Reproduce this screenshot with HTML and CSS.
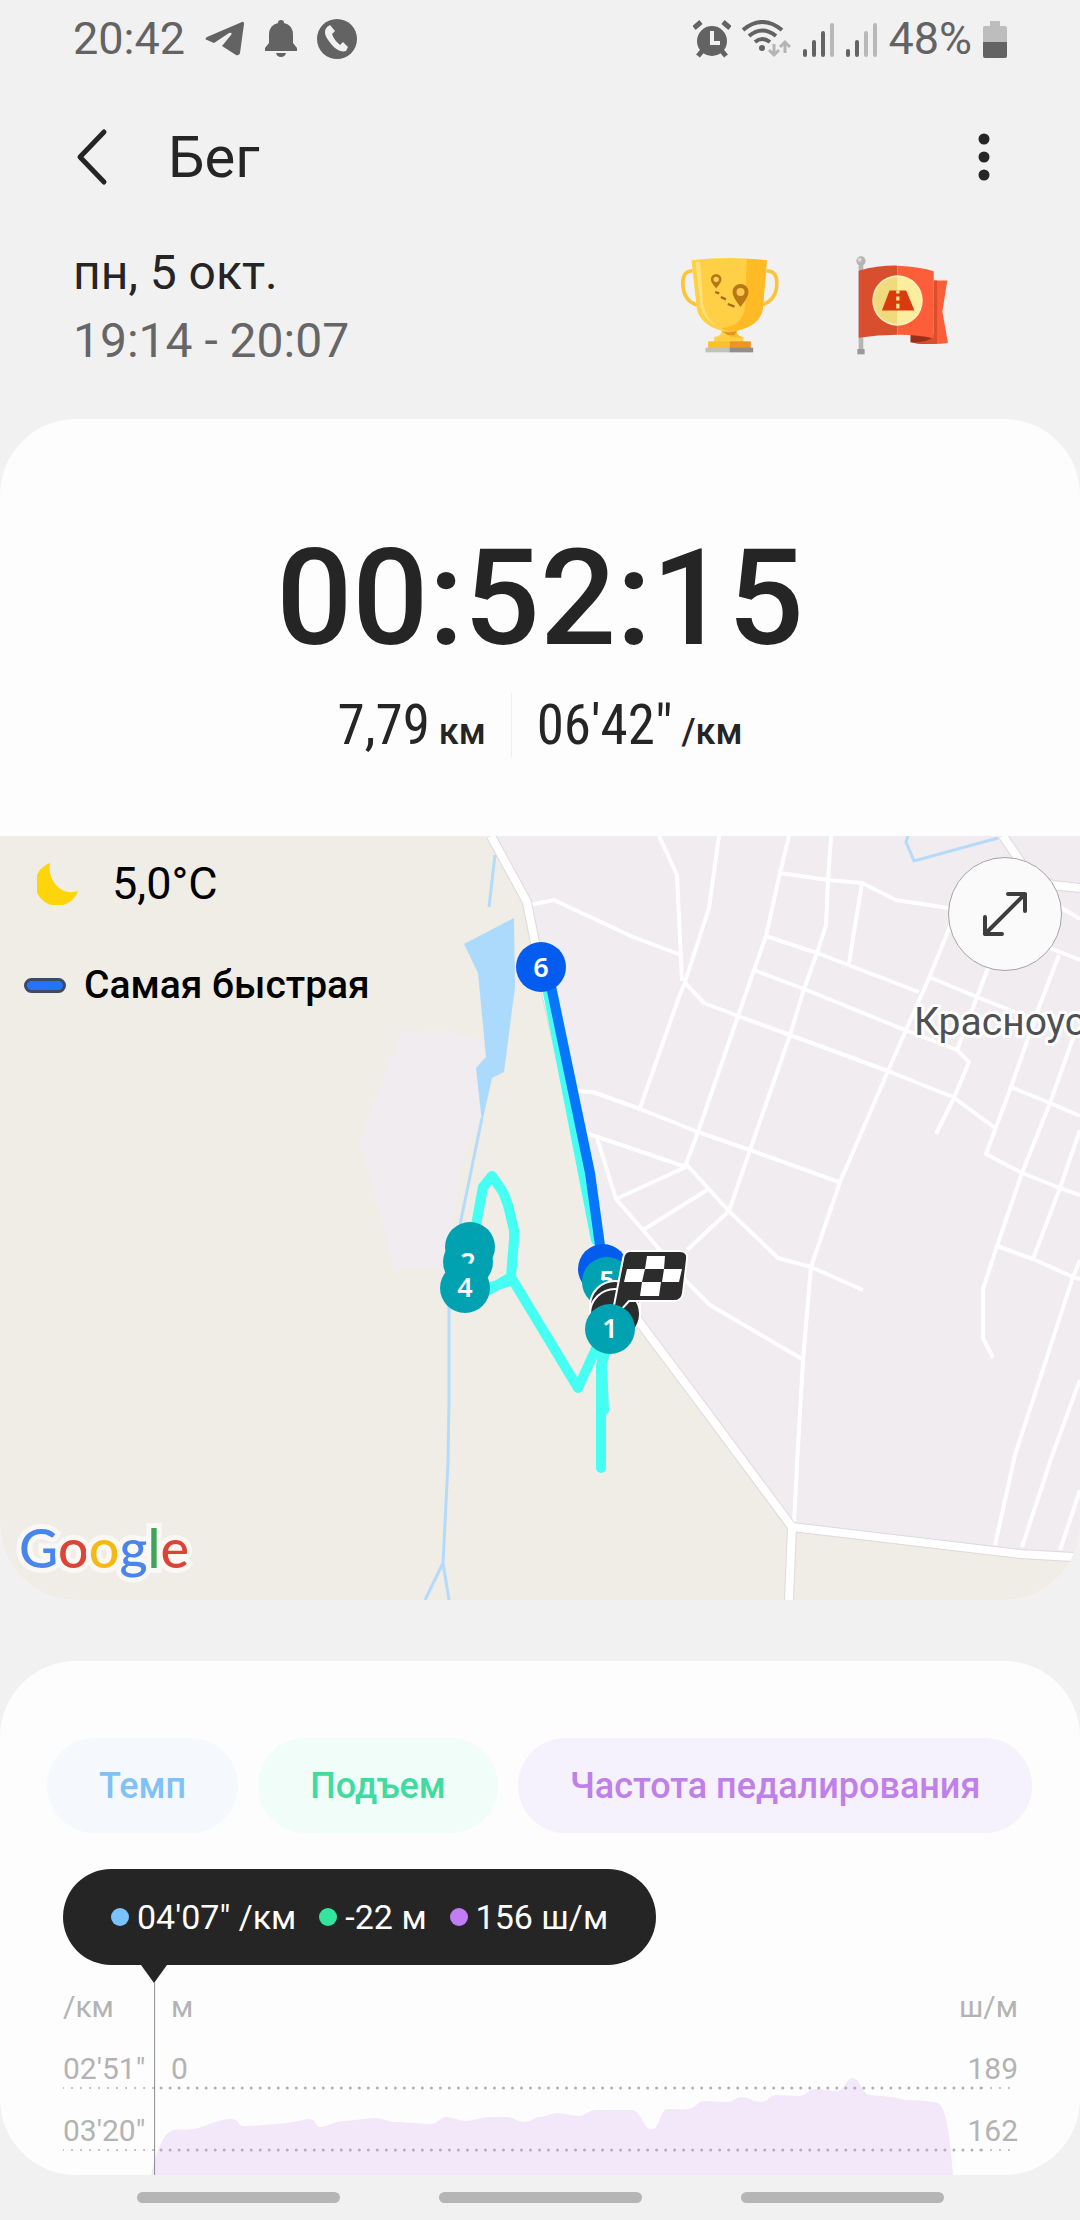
FILE: index.html
```
<!DOCTYPE html>
<html lang="ru">
<head>
    <meta charset="UTF-8">
    <meta name="viewport" content="width=device-width, initial-scale=1.0">
    <title>Бег</title>
    <link rel="stylesheet" href="styles.css">
</head>
<body>

<div class="app">

    <!-- Status bar -->
    <div class="status-bar">
        <div class="status-left">
            <span>20:42</span>
            <svg width="40" height="36" viewBox="0 0 40 36"><path fill="#636363" d="M37 1 2 16q-3 2 0 3l7 3 15-10q4-1 2 2l-9 11 14 9q3 1 4-2l4-29q0-3-2-2z"/></svg>
            <svg width="32" height="38" viewBox="0 0 32 38"><path fill="#636363" d="M16 0a3 3 0 0 1 3 3q9 2 9 12v8l4 5v3H0v-3l4-5v-8Q4 5 13 3a3 3 0 0 1 3-3zM11 33h10q-1 4-5 4t-5-4z"/></svg>
            <svg width="40" height="40" viewBox="0 0 40 40"><circle cx="20" cy="20" r="20" fill="#636363"/><path fill="#f1f1f1" d="m10 8 3-2 5 6-3 3q2 6 8 11l3-3 5 5-2 4q-7 2-14-6T8 14q0-4 2-6z"/></svg>
        </div>
        <div class="status-right">
            <svg width="38" height="38" viewBox="0 0 38 38"><g stroke="#636363" stroke-width="5" fill="none"><path d="m1 8 7-6M37 8l-7-6M5 36l5-6M33 36l-5-6"/></g><circle cx="19" cy="21" r="15" fill="#636363"/><path d="M19 11v12h8" stroke="#f1f1f1" stroke-width="4" fill="none"/></svg>
            <svg width="49" height="38" viewBox="0 0 49 38"><g fill="none" stroke="#636363" stroke-width="4"><path d="M1 10q19-16 39 0M7 16q13-11 27 0M13 22q7-6 15 0"/></g><circle cx="20" cy="28" r="3" fill="#636363"/><path d="M32 24v11m-5-5 5 5 5-5M43 33V22m-5 5 5-5 5 5" fill="none" stroke="#b4b4b4" stroke-width="3"/></svg>
            <svg width="32" height="36" viewBox="0 0 32 36"><g stroke-width="4" stroke-linecap="round" stroke="#636363"><path d="M3 30v4M12 21v13M21 12v22"/><path d="M30 4v30" stroke="#b8b8b8"/></g></svg>
            <svg width="32" height="36" viewBox="0 0 32 36"><g stroke-width="4" stroke-linecap="round" stroke="#636363"><path d="M3 30v4M12 21v13"/><path d="M21 12v22M30 4v30" stroke="#b8b8b8"/></g></svg>
            <span>48%</span>
            <svg width="24" height="37" viewBox="0 0 24 37"><path fill="#bdbdbd" d="M7 0h10v5h5q2 0 2 2v15H0V7q0-2 2-2h5z"/><path fill="#636363" d="M0 21h24v14q0 2-2 2H2q-2 0-2-2z"/></svg>
        </div>
    </div>

    <!-- Header -->
    <header class="header">
        <button class="icon-button" type="button" aria-label="Назад">
            <svg width="34" height="58" viewBox="0 0 34 58"><path d="M30 4 6 29l24 25" fill="none" stroke="#252525" stroke-width="5" stroke-linecap="round" stroke-linejoin="round"/></svg>
        </button>
        <h1>Бег</h1>
        <button class="icon-button menu-button" type="button" aria-label="Меню">
            <svg width="12" height="50" viewBox="0 0 12 50"><g fill="#252525"><circle cx="6" cy="7" r="5.5"/><circle cx="6" cy="25" r="5.5"/><circle cx="6" cy="43" r="5.5"/></g></svg>
        </button>
    </header>

    <section class="summary">
        <div>
            <div class="date">пн, 5 окт.</div>
            <div class="period">19:14 - 20:07</div>
        </div>
        <div class="awards">
            <svg width="99" height="96" viewBox="58 50 296 288">
                <path d="M96 92q-30-2-30 36 0 52 42 66M316 92q32-2 32 36 0 52-46 66" fill="none" stroke="#fdc43a" stroke-width="11"/>
                <path fill="#ffd046" d="M92 60q112-14 226 0l-12 145q-8 50-78 66-4 14 20 20v14H160v-14q26-6 22-20-64-18-74-66z"/>
                <path fill="#ffba25" d="M258 56q30 0 60 4l-12 145q-8 50-78 66-4 14 20 20h-40v-18q-20-2-26-9 66-8 70-64z"/>
                <path fill="#ffe07a" d="M104 64h14l9 128q8 44 44 66-44-20-52-60z"/>
                <path fill="#df9620" d="M182 272q28 8 46-1l-8 14h-18z"/>
                <path fill="#fbc02d" d="M142 303h64v20h-64z"/><path fill="#ec9622" d="M206 303h64v20h-64z"/>
                <path fill="#bfc3be" d="M134 322h72v14h-72z"/><path fill="#8c8f8b" d="M206 322h71v14h-71z"/>
                <path fill="#b87915" d="M166 101a16 16 0 0 1 16 16q0 10-16 27-16-17-16-27a16 16 0 0 1 16-16zM239 131a24 24 0 0 1 24 24q0 15-24 45-24-30-24-45a24 24 0 0 1 24-24z"/>
                <circle cx="166" cy="117" r="8" fill="#fdd05a"/><circle cx="239" cy="155" r="12" fill="#fdc64e"/>
                <path d="m163 155 12 4M180 170l15 7M201 191l20 8" stroke="#a66a1c" stroke-width="7"/>
            </svg>
            <svg width="93" height="99" viewBox="586 46 280 298">
                <path fill="#b5b5b5" d="M594 70h14v260h-14z"/><path fill="#999" d="M590 326h22v16h-22z"/><circle cx="601" cy="61" r="14" fill="#b4b4b4"/><circle cx="597" cy="57" r="6" fill="#dcdcdc"/>
                <path fill="#9c2f1a" d="M750 282h75v26q-40 6-75-2z"/>
                <path fill="#fb5e38" d="M820 120h41l-15 93 17 95q-20 3-43 3z"/>
                <path fill="#d94e2c" d="M820 120h10v190q-40 2-72-3 44-2 62-18z"/>
                <path fill="#d94e2c" d="M594 90q60-16 117-15v208q-60 0-117 9z"/>
                <path fill="#fb5e38" d="M711 75q70 3 109 17v202q-50-12-109-11z"/>
                <circle cx="711" cy="180" r="76" fill="#fff0bd"/><path fill="#f1da7d" d="M711 109a71 71 0 0 0 0 142z"/><path fill="#fcee9f" d="M711 109a71 71 0 0 1 0 142z"/>
                <path fill="#d93a0e" d="M687 150h50l25 60h-98z"/><path fill="#fae58f" d="M707 150h10v9h-10zM707 168h10v12h-10zM707 190h10v14h-10z"/>
            </svg>
        </div>
    </section>

    <!-- Workout result and map -->
    <main>
        <section class="card result">
            <div class="timer">00:52:15</div>
            <div class="stats">
                <div class="stat"><span class="value">7,79</span> км</div>
                <div class="stat"><span class="value">06'42"</span> /км</div>
            </div>

            <div class="map">
                <svg class="map-canvas" viewBox="0 836 1080 764" preserveAspectRatio="xMidYMid slice">
                    <rect y="836" width="1080" height="764" fill="#efede5"/>
                    <path fill="#f0ecef" d="M491 836 527 902 535 943 602 1258 640 1323 792 1527 1020 1554 1080 1558V836zM401 1032 441 1030 482 1040 486 1057 476 1069 482 1118 461 1163 450 1267 395 1270 382 1223 367 1170 358 1143z"/>
                    <path fill="#acdafd" d="M464 944 514 918 515 987 504 1072 492 1078 482 1123 476 1068 486 1057 478 973z"/>
                    <g class="streams">
                        <path d="M495 855 489 907M482 1118 461 1220 449 1307 449 1400 448 1463 443 1563 425 1600M443 1563 449 1600M908 836 906 842 914 861 998 838"/>
                    </g>
                    <g class="streets">
                        <path d="M659 836 677 875 682 981M719 836 709 908 685 982 679 997 640 1108M685 983 704 1003 738 1016 790 1035 888 1071 953 1097 995 1128"/>
                        <path d="M789 836 780 873 766 936 754 970 738 1016 698 1132 686 1164 729 1211 778 1258 811 1267 863 1290"/>
                        <path d="M831 836 828 880 826 925 817 953 804 989 790 1035 750 1150 729 1211 687 1250"/>
                        <path d="M780 873 828 880 862 883 896 900 948 908M862 883 849 963M766 936 817 953 919 992"/>
                        <path d="M754 970 804 989 905 1030 957 1050 969 1062 953 1100 936 1134"/>
                        <path d="M956 912 929 978 888 1071 840 1182 811 1267 803 1360 798 1447 794 1522"/>
                        <path d="M929 977 977 997 1015 1012M988 968 977 997 957 1050M1050 948 1080 960M1060 907 1080 919"/>
                        <path d="M1059 955 1039 1007 1011 1087 986 1154 1022 1173 1060 1188 1080 1195M1011 1087 1050 1103 1080 1116"/>
                        <path d="M1076 1030 1050 1103 1022 1173 997 1246 983 1289 983 1338 993 1358M997 1246 1033 1259 1073 1277 1080 1279M1080 1130 1060 1188 1033 1259"/>
                        <path d="M1080 1260 1073 1277 1047 1357 1015 1455 995 1545M1080 1380 1053 1453 1022 1547M1080 1490 1060 1550"/>
                        <path d="M530 905 554 900 633 937 681 955M572 1091 593 1092 640 1109 698 1132 750 1150 839 1182M586 1133 686 1167 616 1199M597 1138 616 1199 643 1230 687 1282 710 1305 802 1359M643 1230 707 1190"/>
                    </g>
                    <g class="road-edge"><path d="M491 836 527 902 535 943 570 1100 602 1258 640 1323 700 1403 792 1527 1020 1554 1073 1557M792 1527 789 1600M1003 836 1030 876 1053 885 1080 888"/></g>
                    <g class="road"><path d="M491 836 527 902 535 943 570 1100 602 1258 640 1323 700 1403 792 1527 1020 1554 1073 1557M792 1527 789 1600M1003 836 1030 876 1053 885 1080 888"/></g>

                    <text class="town" x="914" y="1035">Красноус</text>

                    <!-- Track -->
                    <g class="track">
                        <path d="M543 967 596 1240M476 1225 483 1187 492 1176 503 1192 508 1205 514 1230 514 1240 511 1277 578 1388 600 1340M511 1277 470 1301M511 1281 470 1293M602 1340V1364L604 1410M606 1350 601 1366V1468"/>
                    </g>
                    <path class="track-fast" d="M547 967 590 1173 602 1260"/>

                    <!-- Kilometre markers -->
                    <g class="marker">
                        <circle class="fast" cx="541" cy="967" r="25"/><text x="541" y="977">6</text>
                        <circle cx="470" cy="1247" r="25"/><text x="472" y="1257">3</text>
                        <circle cx="468" cy="1262" r="25"/><text x="468" y="1272">2</text>
                        <circle cx="465" cy="1288" r="25"/><text x="465" y="1297">4</text>
                        <circle class="fast" cx="603" cy="1269" r="25"/>
                        <circle cx="607" cy="1282" r="25"/><text x="607" y="1290">5</text>
                    </g>
                    <g fill="#2c2c2c" stroke="#fff" stroke-width="2">
                        <circle cx="615" cy="1306" r="25"/><circle cx="615" cy="1314" r="25"/>
                        <path d="M630 1251h50q8 0 7 8l-4 34q-1 8-9 8h-45l-18 20 12-62q1-8 7-8z"/>
                    </g>
                    <path fill="#fff" d="M647 1256h18l-1 13h-19zM627 1269h18l-3 13h-18zM664 1269h18l-3 13h-17zM642 1282h19l-2 14h-19z"/>
                    <g class="marker"><circle cx="610" cy="1329" r="25"/><text x="610" y="1338">1</text></g>
                </svg>

                <div class="map-info">
                    <div class="weather">
                        <svg width="42" height="42" viewBox="0 0 42 42"><path fill="#fdd50a" d="M13 0A22 22 0 1 0 41 28Q28 32 19 22 11 13 13 0z"/></svg>
                        <span>5,0°C</span>
                    </div>
                    <div class="legend"><i></i><span>Самая быстрая</span></div>
                </div>

                <button class="expand" type="button" aria-label="Развернуть карту">
                    <svg width="46" height="46" viewBox="0 0 46 46"><path d="M3 43 43 3M26 3h17v17M3 26v17h17" fill="none" stroke="#3d3d3d" stroke-width="4" stroke-linecap="round" stroke-linejoin="round"/></svg>
                </button>

                <div class="google"><span class="b">G</span><span class="r">o</span><span class="y">o</span><span class="b">g</span><span class="g">l</span><span class="r">e</span></div>
            </div>
        </section>

        <!-- Charts -->
        <section class="card charts">
            <div class="chips">
                <button class="chip pace" type="button">Темп</button>
                <button class="chip climb" type="button">Подъем</button>
                <button class="chip cadence" type="button">Частота педалирования</button>
            </div>

            <div class="tooltip">
                <span class="point pace">04'07" /км</span>
                <span class="point climb">-22 м</span>
                <span class="point cadence">156 ш/м</span>
            </div>

            <div class="chart">
                <svg class="plot" viewBox="0 0 954 210" preserveAspectRatio="none">
                    <path fill="#f3e8fa" d="M88 210Q96 172 108 166C112 164 120 165 130 164S154 154 166 154 174 161 181 161 225 159 240 155 250 162 257 162 270 156 280 156 303 153 311 153 325 157 333 157 359 159 367 159 376 152 383 152 395 156 402 156 418 152 426 152 436 152 443 152 453 157 460 157 472 152 477 152 487 148 494 148 508 151 515 151 525 145 532 145 558 145 568 145 579 164 588 164 596 144 604 144 617 145 625 144 633 136 641 136 655 137 663 137 671 132 678 132 689 137 697 137 705 130 713 130 727 131 735 131 744 124 752 124 765 126 773 126 782 113 789 113 798 129 806 130 820 131 828 132 837 135 845 135 863 136 870 137 878 141 882 153Q886 170 889 210z"/>
                    <g class="grid-line"><path d="M98 123H918M98 185H918"/><path class="thin" d="M0 123H98M918 123H954M0 185H98M918 185H954"/></g>
                    <path d="M91.5 17V210" stroke="#8c8c8c"/>
                </svg>
                <div class="axis"><span>/км</span><span>м</span><span>ш/м</span></div>
                <div class="axis"><span>02'51"</span><span>0</span><span>189</span></div>
                <div class="axis"><span>03'20"</span><span></span><span>162</span></div>
            </div>
        </section>
    </main>

    <nav class="nav-bar"><i></i><i></i><i></i></nav>

</div>

</body>
</html>
```
FILE: styles.css
```
* {
    box-sizing: border-box;
}
body {
    margin: 0;
    font-family: Roboto, "Liberation Sans", sans-serif;
    background-color: #f1f1f1;
    color: #252525;
}
svg {
    display: block;
    flex-shrink: 0;
}
button {
    border: none;
    padding: 0;
    font-family: inherit;
    cursor: pointer;
}
.app {
    display: flex;
    flex-direction: column;
    min-height: 100vh;
}

/* Status bar */
.status-bar {
    display: flex;
    justify-content: space-between;
    padding: 12px 73px 0;
    font-size: 45px;
    line-height: 54px;
    color: #636363;
}
.status-left, .status-right {
    display: flex;
    align-items: center;
}
.status-left {
    gap: 20px;
}
.status-right {
    gap: 11px;
}

/* Header */
.header {
    display: flex;
    align-items: center;
    height: 68px;
    margin-top: 57px;
    padding: 0 90px 0 74px;
}
.icon-button {
    background: none;
}
h1 {
    margin: 0 0 0 60px;
    font-size: 58px;
    line-height: 68px;
    font-weight: 400;
}
.menu-button {
    margin-left: auto;
}
.summary {
    display: flex;
    justify-content: space-between;
    align-items: center;
    margin-top: 48px;
    padding: 0 131px 0 73px;
    font-size: 48px;
    line-height: 68px;
}
.period {
    color: #666;
}
.awards {
    display: flex;
    align-items: center;
    gap: 77px;
    margin-bottom: 4px;
}

/* Cards */
.card {
    background-color: #fdfdfd;
    border-radius: 76px;
    overflow: hidden;
}
.result {
    margin-top: 44px;
    padding-top: 100px;
}
.timer {
    font-size: 134px;
    line-height: 160px;
    font-weight: 500;
    text-align: center;
}
.stats {
    display: flex;
    justify-content: center;
    height: 64px;
    margin: 14px 0 79px;
    line-height: 64px;
}
.stat {
    padding: 0 25px;
    font-size: 36px;
    font-weight: 500;
}
.stat + .stat {
    border-left: 1px solid #f0f0f0;
}
.value {
    font-family: "Roboto Condensed", Roboto, sans-serif;
    font-size: 55px;
    font-weight: 400;
}

/* Map */
.map {
    position: relative;
    height: 764px;
    overflow: hidden;
}
.map-canvas {
    width: 100%;
    height: 100%;
}
.streams {
    fill: none;
    stroke: #b4dcfa;
    stroke-width: 3;
}
.streets {
    fill: none;
    stroke: #fff;
    stroke-width: 4;
    stroke-linejoin: round;
}
.road-edge {
    fill: none;
    stroke: #dcdadc;
    stroke-width: 10;
}
.road {
    fill: none;
    stroke: #fff;
    stroke-width: 8;
}
.town {
    font-size: 39px;
    fill: #4f5052;
    stroke: #fff;
    stroke-width: 6;
    stroke-linejoin: round;
    paint-order: stroke;
}
.track, .track-fast {
    fill: none;
    stroke: #45fff3;
    stroke-width: 10;
    stroke-linecap: round;
    stroke-linejoin: round;
}
.track-fast {
    stroke: #0677fb;
}
.marker circle {
    fill: #00a2b1;
}
.marker .fast {
    fill: #045cee;
}
.marker text {
    font-family: "Noto Sans", sans-serif;
    font-size: 27px;
    font-weight: 600;
    text-anchor: middle;
    fill: #fff;
}
.map-info {
    position: absolute;
    top: 21px;
    left: 24px;
    color: #000;
}
.weather {
    display: flex;
    align-items: center;
    gap: 33px;
    padding-left: 13px;
    font-size: 45px;
    line-height: 54px;
}
.legend {
    display: flex;
    align-items: center;
    gap: 18px;
    margin-top: 51px;
    font-size: 39px;
    line-height: 46px;
    font-weight: 500;
}
.legend i {
    width: 42px;
    height: 15px;
    border: 3px solid #3c4a63;
    border-radius: 8px;
    background-color: #2473fb;
}
.expand {
    position: absolute;
    top: 21px;
    right: 18px;
    display: flex;
    align-items: center;
    justify-content: center;
    width: 114px;
    height: 114px;
    border: 1px solid #a5a5a5;
    border-radius: 50%;
    background-color: #fafafa;
}
.google {
    position: absolute;
    left: 19px;
    bottom: 20px;
    font-family: Lato, sans-serif;
    font-size: 54px;
    line-height: 64px;
    font-weight: 500;
    -webkit-text-stroke: 10px #f9f8f5;
    paint-order: stroke;
}
.google .b {
    color: #4885ed;
}
.google .r {
    color: #db4437;
}
.google .y {
    color: #f4b914;
}
.google .g {
    color: #3fa457;
}

/* Charts */
.charts {
    margin-top: 61px;
    padding: 77px 46px 0 47px;
}
.chips {
    display: flex;
    gap: 20px;
}
.chip {
    height: 95px;
    padding: 0 52px;
    border-radius: 48px;
    font-size: 36px;
    font-weight: 500;
    white-space: nowrap;
}
.chip.pace {
    background-color: #f5f9fd;
    color: #80c2f8;
}
.chip.climb {
    background-color: #f1fdf8;
    color: #41dba0;
}
.chip.cadence {
    background-color: #f5f1fd;
    color: #bf80ea;
}
.tooltip {
    position: relative;
    display: flex;
    gap: 23px;
    width: fit-content;
    margin: 36px 0 0 16px;
    padding: 0 48px;
    border-radius: 48px;
    background-color: #252525;
    color: #fff;
    font-size: 34px;
    line-height: 96px;
}
.tooltip::after {
    content: "";
    position: absolute;
    top: 100%;
    left: 78px;
    border: 13px solid transparent;
    border-top: 18px solid #252525;
    border-bottom: none;
}
.point {
    display: flex;
    align-items: center;
    gap: 8px;
}
.point::before {
    content: "";
    width: 18px;
    height: 18px;
    border-radius: 50%;
    background-color: #79c2ff;
}
.point.climb::before {
    background-color: #35e49c;
}
.point.cadence::before {
    background-color: #c27cf4;
}
.chart {
    position: relative;
    display: flex;
    flex-direction: column;
    gap: 26px;
    height: 210px;
    margin: 0 16px;
    padding-top: 24px;
}
.plot {
    position: absolute;
    inset: 0;
    width: 100%;
    height: 100%;
}
.grid-line {
    fill: none;
    stroke: #b5adb9;
    stroke-width: 3;
    stroke-linecap: round;
    stroke-dasharray: 0 9;
}
.grid-line .thin {
    stroke-width: 2;
}
.axis {
    position: relative;
    display: grid;
    grid-template-columns: 108px 1fr auto;
    font-size: 30px;
    line-height: 36px;
    color: #b3b3b3;
}

/* Navigation bar */
.nav-bar {
    display: flex;
    justify-content: center;
    gap: 99px;
    padding: 17px 0;
}
.nav-bar i {
    width: 203px;
    height: 11px;
    border-radius: 6px;
    background-color: #b5b5b5;
}
```
